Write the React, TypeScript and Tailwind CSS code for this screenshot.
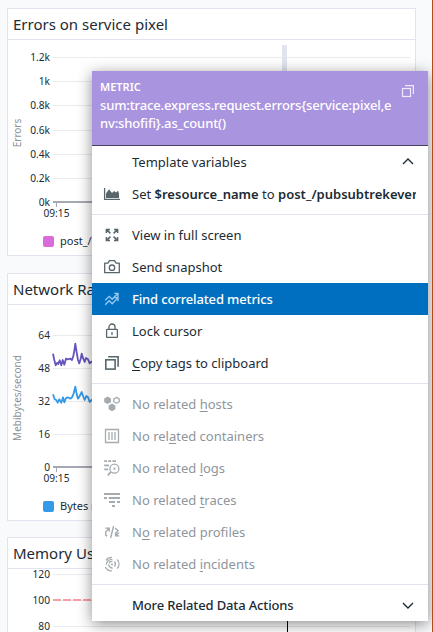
import type { ReactNode } from "react";

type Tick = { label: string; y: number };

const GRID_LEFT = 45;
const GRID_RIGHT = 402;

function Card({ title, height, children }: { title: string; height: string; children: ReactNode }) {
  return (
    <section className={`w-[409px] shrink-0 border border-[#e1e4ee] bg-white ${height}`}>
      <h2 className="flex h-[31px] items-center border-b border-[#e1e4ee] pl-[5px] text-[15px] leading-5 whitespace-nowrap">
        {title}
      </h2>
      {children}
    </section>
  );
}

function Grid({ ticks, unit, unitY, axis }: { ticks: Tick[]; unit?: string; unitY?: number; axis?: number }) {
  return (
    <>
      {ticks.map((t) => (
        <g key={t.label}>
          {t.y !== axis && <path d={`M${GRID_LEFT} ${t.y + 0.5}H${GRID_RIGHT}`} stroke="#eaebee" />}
          <text x="42" y={t.y + 4} textAnchor="end" fontSize="10.2" fill="#1c2b34">{t.label}</text>
        </g>
      ))}
      {axis !== undefined && (
        <>
          <path d={`M${GRID_LEFT} ${axis}H${GRID_RIGHT}`} stroke="#878c9b" strokeWidth="1.5" />
          <path d={`M48.5 ${axis}v5`} stroke="#a4a8b5" />
          <text x="48.5" y={axis + 15} textAnchor="middle" fontSize="10.2" fill="#1c2b34">09:15</text>
        </>
      )}
      {unit && (
        <text transform={`translate(13 ${unitY}) rotate(-90)`} textAnchor="middle" fontSize="10" fill="#8b9297">
          {unit}
        </text>
      )}
    </>
  );
}

function Legend({ color, label }: { color: string; label: string }) {
  return (
    <div className="flex h-[14px] items-center gap-[6px] pl-[35px] text-[11px] leading-[14px] whitespace-nowrap">
      <span className={`h-[11px] w-[11px] rounded-[2px] ${color}`} />
      {label}
    </div>
  );
}

function Icon({ children }: { children: ReactNode }) {
  return (
    <svg className="h-4 w-4 shrink-0 overflow-visible" viewBox="0 0 16 16" fill="none" stroke="currentColor" strokeWidth="1.3">
      {children}
    </svg>
  );
}

const AreaIcon = () => (
  <Icon>
    <path d="M.6 2v11.4H16" />
    <path d="M2 12V7.6l3-4.4L8 7l2-2 2 1.5L14 4.8l1 3V12z" fill="currentColor" stroke="none" />
  </Icon>
);
const ExpandIcon = () => (
  <Icon>
    <path strokeWidth="1.5" d="M2.4 6V2.4H6M2.6 2.6l3.8 3.8M10 2.4h3.6V6M13.4 2.6L9.6 6.4M2.4 10v3.6H6M2.6 13.4l3.8-3.8M10 13.6h3.6V10M13.4 13.4L9.6 9.6" />
  </Icon>
);
const CameraIcon = () => (
  <Icon>
    <path d="M.7 4.2h3.2l1.6-2.6h5l1.6 2.6h3.2v9.5H.7z" strokeLinejoin="round" />
    <circle cx="8" cy="8.7" r="2.7" />
  </Icon>
);
const CorrelateIcon = () => (
  <Icon>
    <path d="M1.2 9.3l4-4 3 3 5.6-5.8M10.3 2.3H14v3.6M1.2 13.7l4-4 3 3 5.6-5.8M10.5 6.7H14v3.5" />
  </Icon>
);
const LockIcon = () => (
  <Icon>
    <rect x="2.6" y="6.4" width="10.8" height="8" rx=".6" />
    <path d="M5 6.2V4a3 3 0 0 1 6 0v2.2M8 9v3" />
  </Icon>
);
const CopyIcon = () => (
  <Icon>
    <rect x="1.8" y="4.8" width="9.3" height="9.3" strokeWidth="1.6" />
    <path d="M4.2 1.8h9.9v10" strokeWidth="1.6" />
  </Icon>
);
const HostsIcon = () => (
  <Icon>
    <path d="M3.6.5l3.4 1.9v3.8L3.6 8.1.2 6.2V2.4zM8 7.6l3.4 1.9v3.8L8 15.2l-3.4-1.9V9.5z" fill="currentColor" stroke="none" />
    <path d="M12.5 1.4l2.7 1.5v2.8l-2.7 1.5-2.7-1.5V2.9z" />
  </Icon>
);
const ContainerIcon = () => (
  <Icon>
    <path d="M1.5 1.5h13v13h-13zM5 4v8M8 4v8M11 4v8" />
  </Icon>
);
const LogsIcon = () => (
  <Icon>
    <path d="M.2 1.2H3M4.2 1.2H7.2M8.4 1.2h3.6M.2 5.3h4.8M.2 9.3h4" strokeWidth="1.8" />
    <circle cx="10.4" cy="8.7" r="4.5" />
    <path d="M7 11.8l-3.3 3.5" strokeWidth="1.8" />
    <circle cx="10.4" cy="8.7" r="1.1" fill="currentColor" stroke="none" />
  </Icon>
);
const TracesIcon = () => (
  <Icon>
    <path d="M0 2h16M0 6h3M4.8 6H16M5 10h6M13 10h3M8 14h3" strokeWidth="1.8" />
  </Icon>
);
const ProfilesIcon = () => (
  <Icon>
    <path d="M9.6 2L6.6 14M1.3 4.1h3.9v3.6M5 4.3L1.7 7.9v3.3l1.5.9M11 4l3 2.7-2.4 3M11.6 8.3v3.6h3.6M11.8 11.7l3.2-3" strokeWidth="1.4" />
  </Icon>
);
const IncidentsIcon = () => (
  <Icon>
    <path d="M8 1.3A6.8 6.8 0 0 0 2 4.3M1.3 11A6.8 6.8 0 0 0 8 14.8M2.3 8.8a5.5 5.5 0 0 1 6-5.3M4.7 8.2a3.6 3.6 0 0 0 4 3.8M5 7.3a3 3 0 0 1 3.5-1.8M10.5 5.5a4 4 0 0 1 0 5M13.3 3.5a7 7 0 0 1 0 9" />
    <circle cx="8" cy="8.4" r="1" fill="currentColor" stroke="none" />
  </Icon>
);

function Row({ icon, active, muted, children }: { icon?: ReactNode; active?: boolean; muted?: boolean; children: ReactNode }) {
  const tone = active ? "bg-[#006fc0] text-white" : muted ? "text-[#8e969b]" : "text-[#1c2b34]";
  const iconTone = active ? "text-[#9bcaf0]" : muted ? "text-[#a5abaf]" : "text-[#58666c]";
  return (
    <div className={`flex h-8 items-center gap-3 px-3 text-[13px] leading-5 whitespace-nowrap ${tone}`}>
      <span className={`flex h-4 w-4 shrink-0 ${iconTone}`}>{icon}</span>
      <span className="flex min-w-0 flex-1 items-center overflow-hidden">
        <span className="w-full">{children}</span>
      </span>
    </div>
  );
}

const Divider = () => <div className="my-1 h-px bg-[#e1e4ee]" />;
const Key = ({ children }: { children: ReactNode }) => (
  <span className="underline decoration-1 underline-offset-2">{children}</span>
);

function Chevron({ up }: { up?: boolean }) {
  return (
    <svg className="h-4 w-4" viewBox="0 0 16 16" fill="none" stroke="#1c2b34" strokeWidth="1.4">
      <path d={up ? "M3 10l5-5 5 5" : "M3 6l5 5 5-5"} />
    </svg>
  );
}

function ContextMenu() {
  return (
    <div className="absolute top-[71px] left-[92px] h-[550px] w-[336px] bg-white shadow-[0_3px_14px_rgba(0,0,0,0.45)]">
      <div className="flex h-[75px] justify-between border-b border-[#484259] bg-[#a994df] pt-[7px] pr-[13px] pl-2 text-white">
        <div>
          <div className="text-[11px] leading-[18px] font-semibold">METRIC</div>
          <div className="text-[13px] leading-[18px] font-medium tracking-[-0.14px] whitespace-nowrap">
            sum:trace.express.request.errors&#123;service:pixel,e
            <br />
            nv:shofifi&#125;.as_count()
          </div>
        </div>
        <svg className="mt-[6px] h-[14px] w-[14px]" viewBox="0 0 14 14" fill="none" stroke="#eee9fb" strokeWidth="1.2">
          <rect x="1.5" y="4.5" width="8" height="8" />
          <path d="M4 1.6h8.4V10" />
        </svg>
      </div>
      <Row><span className="flex items-center justify-between">Template variables<Chevron up /></span></Row>
      <Row icon={<AreaIcon />}>Set <b className="font-semibold">$resource_name</b> to <b className="font-semibold">post_/pubsubtrekevent</b></Row>
      <Divider />
      <Row icon={<ExpandIcon />}>View in full screen</Row>
      <Row icon={<CameraIcon />}>Send snapshot</Row>
      <Row icon={<CorrelateIcon />} active><span className="font-medium tracking-[-0.14px]">Find correlated metrics</span></Row>
      <Row icon={<LockIcon />}>Lock cursor</Row>
      <Row icon={<CopyIcon />}><Key>C</Key>opy tags to clipboard</Row>
      <Divider />
      <Row icon={<HostsIcon />} muted>No related <Key>h</Key>osts</Row>
      <Row icon={<ContainerIcon />} muted>No rel<Key>a</Key>ted containers</Row>
      <Row icon={<LogsIcon />} muted>No related <Key>l</Key>ogs</Row>
      <Row icon={<TracesIcon />} muted>No related <Key>t</Key>races</Row>
      <Row icon={<ProfilesIcon />} muted>N<Key>o</Key> related profiles</Row>
      <Row icon={<IncidentsIcon />} muted>No related <Key>i</Key>ncidents</Row>
      <Divider />
      <Row><span className="flex items-center justify-between font-medium tracking-[-0.14px]">More Related Data Actions<Chevron /></span></Row>
    </div>
  );
}

export default function App() {
  return (
    <main className="relative h-[632px] w-[433px] overflow-hidden border-r border-[#b5481c] bg-[#f9fafc] font-['Noto_Sans',sans-serif] text-[#1c2b34]">
      <div className="flex flex-col pt-2 pl-[7px]">
        <Card title="Errors on service pixel" height="mb-[17px] h-[248px]">
          <svg className="block h-[194px] w-[407px] overflow-visible" viewBox="0 0 407 194">
            <Grid
              ticks={["1.2k", "1k", "0.8k", "0.6k", "0.4k", "0.2k", "0k"].map((label, i) => ({ label, y: Math.round(17 + i * 24.17) }))}
              unit="Errors" unitY={93} axis={162}
            />
            <rect x="274" y="5" width="5" height="157" fill="#e1e4ee" />
          </svg>
          <Legend color="bg-[#d96bdb]" label="post_/pubsub" />
        </Card>
        <Card title="Network Rate" height="mb-4 h-[248px]">
          <svg className="block h-[194px] w-[407px] overflow-visible" viewBox="0 0 407 194">
            <Grid
              ticks={["64", "48", "32", "16", "0"].map((label, i) => ({ label, y: 30 + i * 33 }))}
              unit="Mebibytes/second" unitY={93} axis={162}
            />
            <g fill="none" strokeWidth="1.8" strokeLinejoin="round">
              <path stroke="#6455bd" d="M45 48.7L46.3 55L47.7 60.3L49.3 57.7L50.3 59L51.7 55.3L53.3 60.3L54.7 55L56.3 59.7L58 53.7L60 54.3L62.3 53.7L64 55L65.3 51L66.3 46L67.3 38.7L68.7 47.7L70 55L71.3 58.3L72.7 53.7L73.7 48.7L75.3 53.7L76.7 57L78 53L80 54.3L81.7 58.3L84 56.3" />
              <path stroke="#3498e8" d="M45 89.3L46.7 94.3L48.3 95L49.7 97.7L51.3 94.3L53.3 97.7L55 92.3L56.3 97.3L58 93L60 92.3L62.3 93.7L64 92.3L65.7 88.3L67.3 81.7L68.7 89.3L70 93.7L71.7 91L73.7 87L75.3 91.7L76.7 95L78.3 91L80 92.3L81.7 97L84 94.3" />
            </g>
          </svg>
          <Legend color="bg-[#349ae8]" label="Bytes received" />
        </Card>
        <Card title="Memory Usage" height="h-[248px]">
          <svg className="block h-[194px] w-[407px] overflow-visible" viewBox="0 0 407 194">
            <Grid ticks={[{ label: "120", y: 5 }, { label: "100", y: 31 }, { label: "80", y: 57 }]} />
            <path d="M45 31h357" stroke="#f5a0a6" strokeWidth="2" strokeDasharray="8 2" />
            <path d="M279.5 0v194" stroke="#000" />
          </svg>
        </Card>
      </div>
      <ContextMenu />
    </main>
  );
}
